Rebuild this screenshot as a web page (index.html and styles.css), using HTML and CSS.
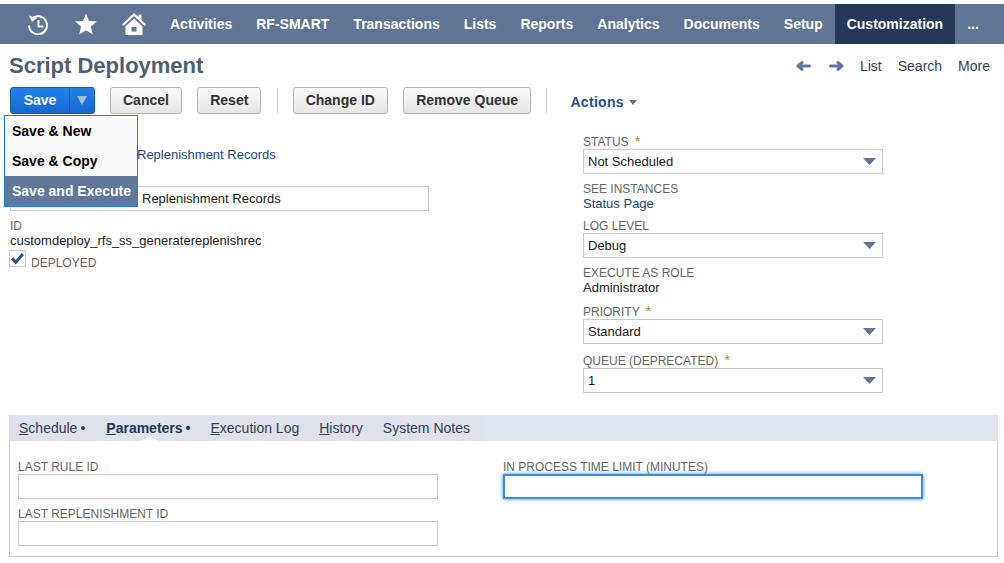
FILE: index.html
```html
<!DOCTYPE html>
<html lang="en">
<head>
  <meta charset="UTF-8">
  <meta name="viewport" content="width=device-width, initial-scale=1.0">
  <title>Script Deployment</title>
  <link rel="stylesheet" href="styles.css">
</head>
<body>

  <nav class="topnav">
    <span class="nav-icon">
      <svg width="24" height="24" viewBox="0 0 24 24" fill="none" stroke="#fff" stroke-width="2">
        <path d="M6 6.500A9 9 0 1 1 3 13.500"/>
        <path d="M2.800 3.500l3.200 6.300 5.200-3.800z" stroke="none" fill="#fff"/>
        <path d="M12.500 8v6.500h5"/>
      </svg>
    </span>
    <span class="nav-icon">
      <svg width="24" height="24" viewBox="0 0 24 24" fill="#fff">
        <path d="M12 1.500l3 7.400 7.900.6-6 5.100 1.900 7.800L12 18.200l-6.800 4.200 1.900-7.800-6-5.100 7.900-.6z"/>
      </svg>
    </span>
    <span class="nav-icon">
      <svg width="26" height="24" viewBox="0 0 26 24" fill="#fff">
        <path d="M13 1L1 12.500l1.500 1.500L13 4l10.500 10 1.500-1.500-4.500-4.300V2.500h-3v2.800z"/>
        <path d="M13 6.500L4.500 14.500V23h17v-8.500zM10.500 15h5v4.500h-5z" fill-rule="evenodd"/>
      </svg>
    </span>
    <a class="nav-item">Activities</a>
    <a class="nav-item">RF-SMART</a>
    <a class="nav-item">Transactions</a>
    <a class="nav-item">Lists</a>
    <a class="nav-item">Reports</a>
    <a class="nav-item">Analytics</a>
    <a class="nav-item">Documents</a>
    <a class="nav-item">Setup</a>
    <a class="nav-item active">Customization</a>
    <a class="nav-item">...</a>
  </nav>

  <div class="title-row">
    <h1>Script Deployment</h1>
    <div class="page-links">
      <svg width="15" height="10" viewBox="0 0 15 10" fill="none" stroke="#5f7596" stroke-width="3" stroke-linecap="round" stroke-linejoin="round"><path d="M13.500 5H3M6 1.700L2 5l4 3.300"/></svg>
      <svg width="15" height="10" viewBox="0 0 15 10" fill="none" stroke="#5f7596" stroke-width="3" stroke-linecap="round" stroke-linejoin="round"><path d="M1.500 5H12M9 1.700L13 5 9 8.300"/></svg>
      <a>List</a>
      <a>Search</a>
      <a>More</a>
    </div>
  </div>

  <div class="toolbar">
    <div class="save-split">
      <span class="save-main">Save</span>
      <span class="save-arrow">
        <svg width="10" height="9" viewBox="0 0 10 9" fill="#a9bdd6"><path d="M0 0h10L5 9z"/></svg>
      </span>
    </div>
    <button class="btn">Cancel</button>
    <button class="btn">Reset</button>
    <span class="divider"></span>
    <button class="btn">Change ID</button>
    <button class="btn">Remove Queue</button>
    <span class="divider"></span>
    <a class="actions">Actions<svg width="8" height="5" viewBox="0 0 8 5" fill="#5f7596"><path d="M0 0h8L4 5z"/></svg></a>

    <div class="save-menu">
      <div class="save-menu-item">Save &amp; New</div>
      <div class="save-menu-item">Save &amp; Copy</div>
      <div class="save-menu-item selected">Save and Execute</div>
    </div>
  </div>

  <div class="form-main">
    <div class="col-left">
      <div class="field script-field">
        <div class="label"></div>
        <a class="value link">Replenishment Records</a>
      </div>
      <div class="field title-field">
        <div class="label"></div>
        <div class="input">Replenishment Records</div>
      </div>
      <div class="field">
        <div class="label">ID</div>
        <div class="value">customdeploy_rfs_ss_generatereplenishrec</div>
      </div>
      <div class="check-row">
        <span class="checkbox">
          <svg width="13" height="12" viewBox="0 0 13 12" fill="#2c5087"><path d="M0 6.500l2.200-2.200 2.500 2.600L10.800 0 13 2 4.800 11.500z"/></svg>
        </span>
        <span class="check-label">Deployed</span>
      </div>
    </div>

    <div class="col-right">
      <div class="field">
        <div class="label">Status <span class="req">*</span></div>
        <div class="input select">Not Scheduled<svg class="caret" width="13" height="7" viewBox="0 0 13 7" fill="#5f7596"><path d="M0 0h13L6.500 7z"/></svg></div>
      </div>
      <div class="field">
        <div class="label">See Instances</div>
        <a class="value link">Status Page</a>
      </div>
      <div class="field">
        <div class="label">Log Level</div>
        <div class="input select">Debug<svg class="caret" width="13" height="7" viewBox="0 0 13 7" fill="#5f7596"><path d="M0 0h13L6.500 7z"/></svg></div>
      </div>
      <div class="field">
        <div class="label">Execute As Role</div>
        <div class="value">Administrator</div>
      </div>
      <div class="field spaced">
        <div class="label">Priority <span class="req">*</span></div>
        <div class="input select">Standard<svg class="caret" width="13" height="7" viewBox="0 0 13 7" fill="#5f7596"><path d="M0 0h13L6.500 7z"/></svg></div>
      </div>
      <div class="field spaced">
        <div class="label">Queue (Deprecated) <span class="req">*</span></div>
        <div class="input select">1<svg class="caret" width="13" height="7" viewBox="0 0 13 7" fill="#5f7596"><path d="M0 0h13L6.500 7z"/></svg></div>
      </div>
    </div>
  </div>

  <section class="tabs-wrap">
    <div class="tabs-bar">
      <div class="tabs">
        <a class="tab dotted first"><u>S</u>chedule</a>
        <a class="tab dotted active"><u>P</u>arameters</a>
        <a class="tab"><u>E</u>xecution Log</a>
        <a class="tab"><u>H</u>istory</a>
        <a class="tab">System Notes</a>
      </div>
    </div>
    <div class="tab-panel">
      <div class="field">
        <div class="label">Last Rule ID</div>
        <div class="input"></div>
      </div>
      <div class="field">
        <div class="label">In Process Time Limit (Minutes)</div>
        <div class="input focused"></div>
      </div>
      <div class="field">
        <div class="label">Last Replenishment ID</div>
        <div class="input"></div>
      </div>
    </div>
  </section>

</body>
</html>
```

FILE: styles.css
```css
body {
  font-family: "Liberation Sans", Arial, sans-serif;
  font-size: 14px;
  margin: 0;
  padding: 0;
  background-color: #fff;
  color: #222;
  overflow: hidden;
}

a {
  text-decoration: none;
}

.topnav {
  display: flex;
  align-items: center;
  height: 40px;
  margin-top: 4px;
  padding-left: 14px;
  background-color: #5f7596;
}

.nav-icon {
  display: flex;
  align-items: center;
  justify-content: center;
  width: 48px;
  height: 40px;
}

.nav-item {
  display: flex;
  align-items: center;
  height: 40px;
  padding: 0 12px;
  color: #fff;
  font-weight: bold;
  line-height: 40px;
}

.nav-item.active {
  background-color: #24385b;
}

.title-row {
  display: flex;
  align-items: center;
  justify-content: space-between;
  height: 43px;
  padding: 0 14px 0 9px;
}

h1 {
  margin: 0;
  font-size: 22px;
  color: #4d5f79;
}

.page-links {
  display: flex;
  align-items: center;
  gap: 16px;
  color: #34425a;
}

.page-links svg + svg {
  margin-left: 2px;
}

.toolbar {
  position: relative;
  display: flex;
  align-items: center;
  height: 27px;
  padding-left: 10px;
}

.save-split {
  display: flex;
  height: 27px;
  width: 85px;
  box-sizing: border-box;
  margin-right: 15px;
  border: 1px solid #125ab2;
  border-radius: 3px;
  background: linear-gradient(#2383ee, #1467cf);
  color: #fff;
  font-weight: bold;
}

.save-main {
  width: 58px;
  line-height: 24px;
  text-align: center;
  border-right: 1px solid #125ab2;
}

.save-arrow {
  display: flex;
  flex: 1;
  align-items: center;
  justify-content: center;
}

.btn {
  height: 27px;
  margin-right: 15.3px;
  padding: 0 12px 2px;
  border: 1px solid #b5b5b5;
  border-radius: 3px;
  background: linear-gradient(#fafafa, #e5e5e5);
  color: #333;
  font-family: inherit;
  font-size: 14px;
  font-weight: bold;
}

.divider {
  width: 1px;
  height: 25px;
  margin-right: 15px;
  background-color: #ccc;
}

.actions {
  margin: 2px 0 0 8px;
  color: #24508f;
  font-weight: bold;
  letter-spacing: 0.3px;
}

.actions svg {
  margin-left: 5px;
  vertical-align: 2px;
}

.save-menu {
  position: absolute;
  left: 4px;
  top: 28px;
  z-index: 5;
  width: 134px;
  box-sizing: border-box;
  border: 1px solid #1a7ae8;
  background-color: #fafafa;
}

.save-menu-item {
  height: 30px;
  padding-left: 7px;
  color: #000;
  font-weight: bold;
  line-height: 30px;
}

.save-menu-item.selected {
  background-color: #607799;
  color: #fff;
}

.form-main {
  display: grid;
  grid-template-columns: 419px 300px;
  column-gap: 154px;
  padding: 21px 0 0 10px;
  font-size: 13px;
}

.field {
  margin-bottom: 8px;
}

.field.spaced {
  margin-top: 10px;
}

.label {
  height: 14px;
  color: #666;
  font-size: 12px;
  line-height: 14px;
  text-transform: uppercase;
}

.req {
  margin-left: 3px;
  color: #c8792b;
  font-size: 14px;
  line-height: 0;
}

.value {
  display: block;
  height: 15px;
  line-height: 15px;
}

.link {
  color: #24477f;
}

.input {
  position: relative;
  box-sizing: border-box;
  height: 25px;
  padding-left: 4px;
  border: 1px solid #ccc;
  background-color: #fff;
  line-height: 23px;
}

.caret {
  position: absolute;
  right: 6px;
  top: 8px;
}

/* left part of these two is under the save menu */
.script-field {
  margin-top: -2px;
  margin-bottom: 10px;
}

.script-field .value {
  padding-left: 127px;
}

.title-field .input {
  padding-left: 131px;
}

.check-row {
  display: flex;
  align-items: flex-end;
  gap: 5px;
  margin: -6px 0 0 -1px;
}

.checkbox {
  display: flex;
  align-items: center;
  justify-content: center;
  box-sizing: border-box;
  width: 17px;
  height: 17px;
  border: 1px solid #ccc;
}

.check-label {
  margin-bottom: -3px;
  color: #666;
  font-size: 12px;
  line-height: 13px;
  text-transform: uppercase;
}

.tabs-wrap {
  width: 989px;
  margin: 14px 0 0 9px;
}

.tabs-bar {
  height: 26px;
  background-color: #dfe5ef;
}

.tabs {
  display: flex;
  width: 474px;
  height: 26px;
  padding-left: 10px;
  box-sizing: border-box;
  background-color: #dee1e9;
  gap: 20px;
}

.tab {
  position: relative;
  color: #34425a;
  line-height: 26px;
  white-space: nowrap;
}

.tab.first {
  margin-right: 1px;
}

.tab.dotted::after {
  content: "\2022";
  margin-left: 3px;
}

.tab.active {
  color: #24385b;
  font-weight: bold;
}

.tab.active::before {
  content: "";
  position: absolute;
  left: 34px;
  bottom: 0;
  border: 10px solid transparent;
  border-top: 0;
  border-bottom: 4px solid #fff;
}

.tab-panel {
  display: grid;
  grid-template-columns: 420px 420px;
  column-gap: 65px;
  align-content: start;
  box-sizing: border-box;
  height: 116px;
  padding: 19px 0 0 8px;
  border: 1px solid #ccc;
  border-top: 0;
}

.input.focused {
  border: 2px solid #3f8be0;
  box-shadow: 0 0 4px #3f8be0;
}
```
